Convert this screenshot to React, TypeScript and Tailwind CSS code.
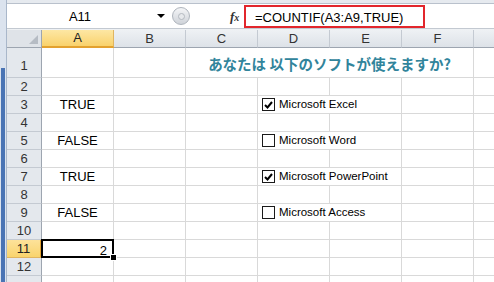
import { FC } from "react";

const COLS = ["A", "B", "C", "D", "E", "F"];

// rows 2..13, values for column A and checkbox label for column D
const ROWS: { n: number; a?: string; box?: { label: string; checked: boolean } }[] = [
  { n: 2 },
  { n: 3, a: "TRUE", box: { label: "Microsoft Excel", checked: true } },
  { n: 4 },
  { n: 5, a: "FALSE", box: { label: "Microsoft Word", checked: false } },
  { n: 6 },
  { n: 7, a: "TRUE", box: { label: "Microsoft PowerPoint", checked: true } },
  { n: 8 },
  { n: 9, a: "FALSE", box: { label: "Microsoft Access", checked: false } },
  { n: 10 },
  { n: 11 },
  { n: 12 },
  { n: 13 },
];

const CheckControl: FC<{ label: string; checked: boolean }> = ({ label, checked }) => (
  <div className="absolute left-[1px] top-[0px] z-10 flex h-[17px] w-[142px] items-center bg-white pl-[3px]">
    <div className="flex h-[13px] w-[13px] items-center justify-center border border-[#1a1a1a] bg-white">
      {checked && (
        <svg width="9" height="8" viewBox="0 0 9 8">
          <path d="M1 4 L3.5 6.5 L8 1" fill="none" stroke="#000" strokeWidth="2" />
        </svg>
      )}
    </div>
    <span className="ml-[4px] whitespace-nowrap text-[11.5px] leading-none text-black">{label}</span>
  </div>
);

const App: FC = () => {
  return (
    <div className="flex h-[282px] w-[494px] overflow-hidden bg-white font-['Liberation_Sans',sans-serif]">
      {/* left window edge */}
      <div className="flex w-[7px] shrink-0 flex-col border-r border-[#a9b7ca] bg-[#dbe3ee]">
        <div className="h-[68px] shrink-0" />
        <div className="mx-[1px] flex-1 bg-[#4a74b4]" />
      </div>

      <div className="flex flex-1 flex-col">
        {/* formula bar */}
        <div className="h-[4px] shrink-0 border-b border-[#b9c1cc] bg-[#e6eaef]" />
        <div className="flex h-[24px] shrink-0 items-center bg-white">
          <div className="w-[146px] pt-[2px] text-center text-[13px] text-black">A11</div>
          <div className="ml-[4px] h-0 w-0 border-x-[4px] border-t-[4px] border-x-transparent border-t-black" />
          <div className="ml-[7px] flex h-[18px] w-[18px] items-center justify-center rounded-full border border-[#aeb4bc] bg-gradient-to-b from-[#f4f5f7] to-[#cfd3d9]">
            <div className="h-[7px] w-[7px] rounded-full border border-[#b4b9c0] bg-[#e7e9ec]" />
          </div>
          <div className="ml-[40px] w-[14px] font-['Liberation_Serif',serif] text-[13px] font-bold italic leading-none text-[#333]">
            f<span className="text-[10px]">x</span>
          </div>
          <div className="h-[23px] w-[181px] border-2 border-[#e2262c] pl-[9px] pt-[2px] text-[13px] leading-[17px] text-black">
            =COUNTIF(A3:A9,TRUE)
          </div>
        </div>
        <div className="h-[2px] shrink-0 border-t border-[#c3c9d1] bg-[#eef1f4]" />

        {/* column headers */}
        <div className="flex h-[18px] shrink-0">
          <div className="relative w-[35px] border-b border-r border-[#9da5b0] bg-[#dfe3e8]">
            <div className="absolute bottom-[3px] right-[3px] h-0 w-0 border-b-[9px] border-l-[9px] border-b-[#b6bcc4] border-l-transparent" />
          </div>
          {COLS.map((c) => (
            <div
              key={c}
              className={
                c === "A"
                  ? "flex w-[72px] items-center justify-center border-b-2 border-r border-b-[#e3a12f] border-r-[#e0b560] bg-gradient-to-b from-[#fde7a3] to-[#f9d26b] text-[13px] text-[#222]"
                  : "flex w-[72px] items-center justify-center border-b border-r border-b-[#9da5b0] border-r-[#c4cad2] bg-gradient-to-b from-[#eef1f4] to-[#dde2e8] text-[13px] text-[#333]"
              }
            >
              {c}
            </div>
          ))}
          <div className="flex-1 border-b border-[#9da5b0] bg-gradient-to-b from-[#eef1f4] to-[#dde2e8]" />
        </div>

        {/* row 1 with merged title C1:F1 */}
        <div className="flex h-[30px] shrink-0">
          <div className="flex w-[35px] items-end justify-center border-b border-r border-b-[#c4cad2] border-r-[#9da5b0] bg-[#e4e8ed] pb-[2px] text-[13px] text-[#333]">
            1
          </div>
          <div className="w-[72px] border-b border-r border-[#d9d9d9]" />
          <div className="w-[72px] border-b border-r border-[#d9d9d9]" />
          <div className="flex w-[288px] items-end justify-center border-b border-r border-[#d9d9d9] pb-[6px] font-['Noto_Sans_CJK_JP',sans-serif] text-[14.5px] font-bold leading-[15px] text-[#31849b]">
            あなたは 以下のソフトが使えますか?
          </div>
          <div className="flex-1 border-b border-[#d9d9d9]" />
        </div>

        {ROWS.map((r) => (
          <div key={r.n} className="flex h-[18px] shrink-0">
            <div
              className={
                r.n === 11
                  ? "flex w-[35px] items-center justify-center border-b border-r-2 border-b-[#e0b560] border-r-[#e3a12f] bg-gradient-to-b from-[#fde29a] to-[#f9d46c] text-[13px] text-[#222]"
                  : "flex w-[35px] items-center justify-center border-b border-r border-b-[#c4cad2] border-r-[#9da5b0] bg-[#e4e8ed] text-[13px] text-[#333]"
              }
            >
              {r.n < 13 && r.n}
            </div>
            {COLS.map((c) => (
              <div
                key={c}
                className="relative flex w-[72px] items-center justify-center border-b border-r border-[#d9d9d9] text-[13px] text-black"
              >
                {c === "A" && r.a}
                {c === "A" && r.n === 11 && (
                  <>
                    <span className="absolute right-[6px] top-[1px]">2</span>
                    <div className="absolute left-[-1px] top-[-1px] z-10 h-[19px] w-[73px] border-2 border-black" />
                    <div className="absolute bottom-[-3px] right-[-3px] z-20 h-[5px] w-[5px] bg-black outline outline-1 outline-white" />
                  </>
                )}
                {c === "D" && r.box && <CheckControl label={r.box.label} checked={r.box.checked} />}
              </div>
            ))}
            <div className="flex-1 border-b border-[#d9d9d9]" />
          </div>
        ))}
      </div>
    </div>
  );
};

export default App;
